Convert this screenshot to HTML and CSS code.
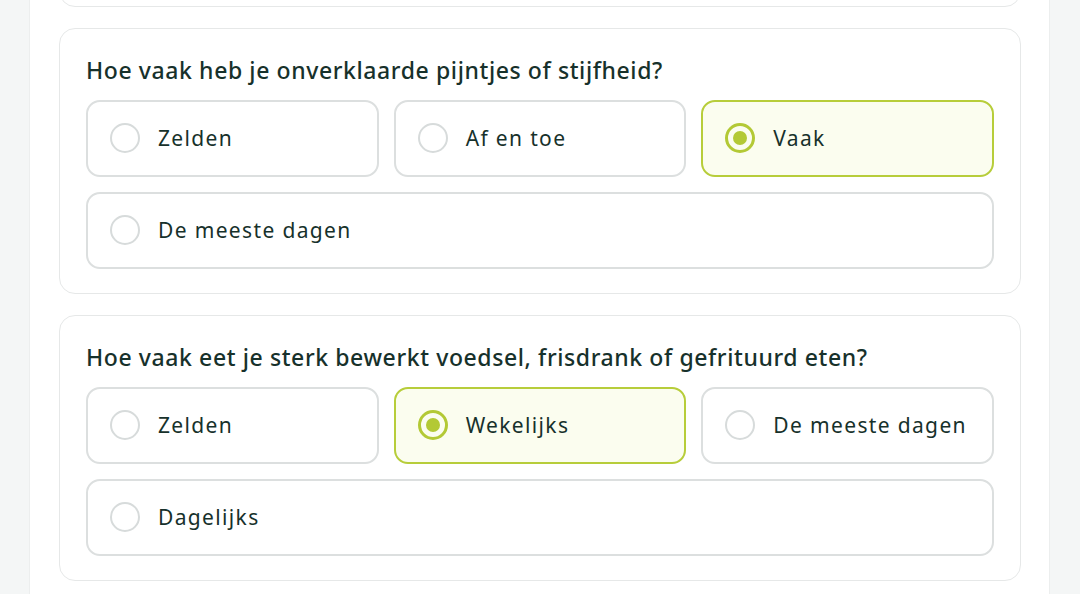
FILE: index.html
```html
<!DOCTYPE html>
<html lang="nl">
<head>
  <meta charset="UTF-8" />
  <meta name="viewport" content="width=device-width, initial-scale=1.0" />
  <title>Leefstijl vragenlijst</title>
  <link rel="stylesheet" href="styles.css">
</head>
<body>

  <div class="page">
    <div class="card card-prev"></div>

    <div class="card">
      <h2 class="question">Hoe vaak heb je onverklaarde pijntjes of stijfheid?</h2>
      <div class="options">
        <label class="option"><span class="radio"></span>Zelden</label>
        <label class="option"><span class="radio"></span>Af en toe</label>
        <label class="option selected"><span class="radio"></span>Vaak</label>
        <label class="option wide"><span class="radio"></span>De meeste dagen</label>
      </div>
    </div>

    <div class="card">
      <h2 class="question">Hoe vaak eet je sterk bewerkt voedsel, frisdrank of gefrituurd eten?</h2>
      <div class="options">
        <label class="option"><span class="radio"></span>Zelden</label>
        <label class="option selected"><span class="radio"></span>Wekelijks</label>
        <label class="option"><span class="radio"></span>De meeste dagen</label>
        <label class="option wide"><span class="radio"></span>Dagelijks</label>
      </div>
    </div>
  </div>

</body>
</html>
```

FILE: styles.css
```css
body {
  font-family: "Noto Sans", Arial, sans-serif;
  background-color: #f4f6f6;
  color: #17312b;
  margin: 0;
  height: 594px;
  overflow: hidden;
}

.page {
  width: 962px;
  margin-left: 29px;
  height: 100%;
  background-color: #fff;
  border-left: 1px solid #eceeee;
  border-right: 1px solid #eceeee;
  padding: 0 28px 0 29px;
  display: flex;
  flex-direction: column;
  gap: 21px;
}

.card {
  border: 1px solid #e6e8e8;
  border-radius: 16px;
  padding: 26px 26px 24px;
  background-color: #fff;
}

.card-prev {
  margin-top: -100px;
  height: 107px;
  padding: 0;
  box-sizing: border-box;
}

.question {
  margin: 0 0 15px;
  font-size: 23px;
  line-height: 30px;
  font-weight: 500;
  letter-spacing: 0.6px;
}

.options {
  display: grid;
  grid-template-columns: repeat(3, 1fr);
  gap: 15px;
}

.option {
  display: flex;
  align-items: center;
  gap: 18px;
  height: 77px;
  box-sizing: border-box;
  padding: 0 22px;
  padding-bottom: 2px;
  border: 2px solid #dcdfdf;
  border-radius: 14px;
  font-size: 21px;
  letter-spacing: 1.35px;
  cursor: pointer;
}

.option.wide {
  grid-column: 1 / -1;
}

.radio {
  width: 30px;
  height: 30px;
  box-sizing: border-box;
  border: 2px solid #d7dbdb;
  border-radius: 50%;
  flex-shrink: 0;
  display: flex;
  align-items: center;
  justify-content: center;
}

.option.selected {
  border-color: #b7cd3a;
  background-color: #fbfdef;
}

.option.selected .radio {
  border: 3px solid #b3c935;
}

.option.selected .radio::after {
  content: "";
  width: 14px;
  height: 14px;
  border-radius: 50%;
  background-color: #b3c935;
}
```
